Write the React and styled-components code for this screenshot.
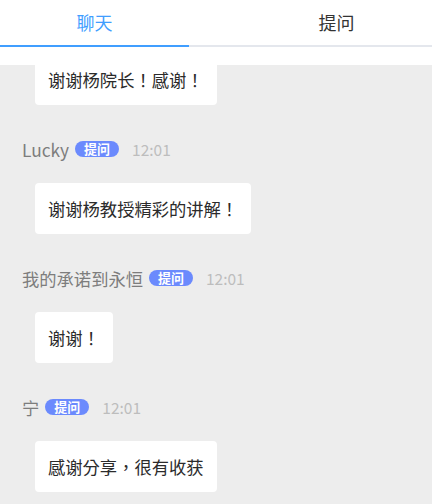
import React, { useLayoutEffect, useRef, useState } from "react";
import styled, { createGlobalStyle } from "styled-components";

const GlobalStyle = createGlobalStyle`
  html, body {
    margin: 0;
    padding: 0;
    height: 100%;
    background: #ededed;
  }
  #root {
    height: 100%;
  }
  * {
    box-sizing: border-box;
  }
`;

const messages = [
  { id: 1, name: "杨院长的学生", time: "12:00", text: "谢谢杨院长！感谢！" },
  { id: 2, name: "Lucky", time: "12:01", text: "谢谢杨教授精彩的讲解！" },
  { id: 3, name: "我的承诺到永恒", time: "12:01", text: "谢谢！" },
  { id: 4, name: "宁", time: "12:01", text: "感谢分享，很有收获" },
];

const App = () => {
  const [tab, setTab] = useState("chat");
  const listRef = useRef(null);

  // the list is already scrolled down a bit
  useLayoutEffect(() => {
    if (listRef.current) listRef.current.scrollTop = 57;
  }, []);

  return (
    <Page>
      <GlobalStyle />
      <Header>
        <Tabs>
          <Tab active={tab === "chat"} onClick={() => setTab("chat")}>
            聊天
          </Tab>
          <Tab active={tab === "ask"} onClick={() => setTab("ask")}>
            提问
          </Tab>
        </Tabs>
      </Header>
      <Scroller ref={listRef}>
        {messages.map((m) => (
          <Message key={m.id}>
            <MetaRow>
              <Name>{m.name}</Name>
              <Badge>提问</Badge>
              <Time>{m.time}</Time>
            </MetaRow>
            <Bubble>{m.text}</Bubble>
          </Message>
        ))}
      </Scroller>
    </Page>
  );
};

export default App;

const Page = styled.div`
  height: 100vh;
  display: flex;
  flex-direction: column;
  background: #ededed;
  font-family: "Noto Sans CJK SC", "Noto Sans", sans-serif;
`;

const Header = styled.div`
  flex: none;
  height: 65px;
  background: #fff;
`;

const Tabs = styled.div`
  display: flex;
  height: 47px;
  background: #fff;
  box-shadow: inset 0 -2px 0 #e4e7ed;
`;

const Tab = styled.div`
  display: flex;
  align-items: center;
  justify-content: center;
  width: 189px;
  padding-bottom: 2px;
  font-size: 18px;
  color: ${(p) => (p.active ? "#409eff" : "#333")};
  border-bottom: 2px solid ${(p) => (p.active ? "#409eff" : "transparent")};
  cursor: pointer;

  & + & {
    flex: 1;
    padding-left: 52px;
  }
`;

const Scroller = styled.div`
  flex: 1;
  overflow: hidden;
  padding: 0 22px;
`;

const Message = styled.div`
  padding-bottom: 32px;
`;

const MetaRow = styled.div`
  display: flex;
  align-items: center;
  height: 24px;
`;

const Name = styled.span`
  font-size: 17.3px;
  color: #7d7d7d;
`;

const Badge = styled.span`
  margin-left: 6px;
  height: 16px;
  line-height: 16px;
  padding: 0 9px;
  border-radius: 8px;
  background: #6b8afd;
  color: #fff;
  font-size: 13px;
  font-weight: 600;
`;

const Time = styled.span`
  margin-left: 13px;
  font-size: 15.5px;
  color: #bdbdbd;
`;

const Bubble = styled.div`
  display: inline-block;
  margin: 22px 0 0 13px;
  padding: 13px;
  background: #fff;
  border-radius: 4px;
  font-family: "Noto Sans CJK TC", "Noto Sans CJK SC", sans-serif;
  font-size: 17.3px;
  line-height: 25px;
  color: #2b2b2b;
`;
